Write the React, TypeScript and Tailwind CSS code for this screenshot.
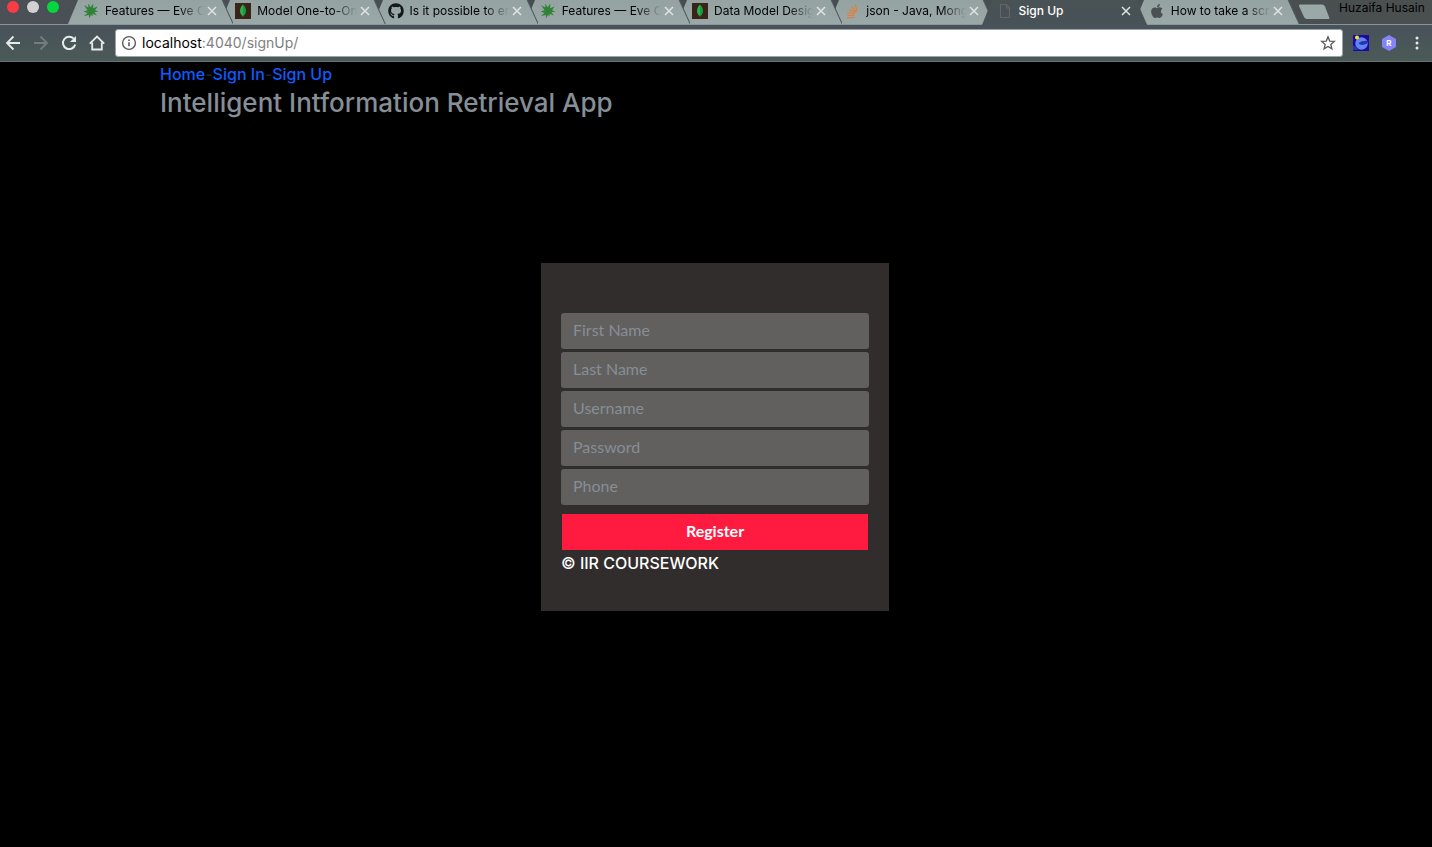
import { useId, type ReactNode } from 'react';
import { FaApple, FaGithub } from 'react-icons/fa';

const LeafIcon = () => (
  <svg viewBox="0 0 16 16" className="size-4" fill="#2f8236">
    <path d="M1 2.200L5.400 4.400 5.200.8 7.700 4.200 10.300.600 10.100 5.200 14.600 3.400 12 7.200 15.400 8.600 11.400 9.300 14 12.600 9.400 10.800 9.800 13 7.900 11.900 6.200 15.500 5.900 12 .9 13 4.600 10 .6 8.600 4.600 7.300z" />
  </svg>
);

const MongoIcon = () => (
  <svg viewBox="0 0 16 16" className="size-4">
    <rect width="16" height="16" fill="#3a2318" />
    <path d="M8 1.500C6 3.600 5 5.400 5 8c0 2.400 1.300 4 2.700 5L8 14.600z" fill="#2fb04c" />
    <path d="M8 1.500c2 2.100 3 3.900 3 6.500 0 2.400-1.300 4-2.700 5L8 14.600z" fill="#1a9d42" />
  </svg>
);

const StackIcon = () => (
  <svg viewBox="0 0 16 16" className="size-4" fill="none" stroke="#ee7a26" strokeWidth="1.100">
    <path d="M3 14.800h7.200M3.200 12.300l7.100.5M3.800 9.500l6.900 1.700M5.200 6.400l6.200 3.400M7.900 3.600l4.500 5.200M11.400 1.600l1.700 6.500" />
  </svg>
);

const PageIcon = () => (
  <svg viewBox="0 0 16 16" className="size-4" fill="none" stroke="#686766" strokeWidth="1">
    <path d="M3.500 1.500h6l3 3.500v9.500h-9zM9.500 1.500V5h3" />
  </svg>
);

type TabInfo = { title: string; icon: ReactNode; layer: string; active?: boolean };

const tabs: TabInfo[] = [
  { title: 'Features — Eve C', icon: <LeafIcon />, layer: 'z-[8]' },
  { title: 'Model One-to-On', icon: <MongoIcon />, layer: 'z-[7]' },
  { title: 'Is it possible to er', icon: <FaGithub className="size-4 text-[#15181a]" />, layer: 'z-[6]' },
  { title: 'Features — Eve C', icon: <LeafIcon />, layer: 'z-[5]' },
  { title: 'Data Model Desig', icon: <MongoIcon />, layer: 'z-[4]' },
  { title: 'json - Java, Mong', icon: <StackIcon />, layer: 'z-[3]' },
  { title: 'Sign Up', icon: <PageIcon />, layer: 'z-[9]', active: true },
  { title: 'How to take a scr', icon: <FaApple className="size-4 text-[#4b5052]" />, layer: 'z-[1]' },
];

function TabShape({ active }: { active?: boolean }) {
  const id = useId();
  return (
    <svg
      viewBox="0 0 165 24"
      preserveAspectRatio="none"
      className={
        active
          ? 'absolute inset-x-0 top-0 -z-10 h-[25px] w-full'
          : 'absolute inset-x-0 top-0 -z-10 h-6 w-full'
      }
    >
      <defs>
        <linearGradient id={id} x1="0" y1="0" x2="0" y2="1">
          <stop offset="0" stopColor={active ? '#495255' : '#94a2a2'} />
          <stop offset="1" stopColor={active ? '#475257' : '#9ba8a8'} />
        </linearGradient>
      </defs>
      <path d="M10 0H154L165 24H0z" fill={`url(#${id})`} />
      {!active && <path d="M154 0L165 24" stroke="#4f595c" strokeWidth="1" />}
    </svg>
  );
}

function Tab({ tab }: { tab: TabInfo }) {
  return (
    <div
      className={`relative isolate -mr-[13px] flex h-6 min-w-0 flex-1 items-start pt-[3px] pr-[13px] pl-[15px] ${tab.layer}`}
    >
      <TabShape active={tab.active} />
      <span className="shrink-0">{tab.icon}</span>
      <button
        type="button"
        className={
          tab.active
            ? 'ml-1.5 min-w-0 flex-1 overflow-hidden text-left text-xs leading-4 font-medium whitespace-nowrap text-white'
            : 'ml-1.5 min-w-0 flex-1 overflow-hidden mask-r-from-75% mask-r-to-100% text-left text-xs leading-4 whitespace-nowrap text-black'
        }
      >
        {tab.title}
      </button>
      <button type="button" aria-label="Close tab" className="size-4 shrink-0">
        <svg viewBox="0 0 16 16" className="size-4" stroke="#dfe3e3" strokeWidth="1.500">
          <path d="M4 4l8 8M12 4l-8 8" />
        </svg>
      </button>
    </div>
  );
}

function TabStrip() {
  return (
    <div className="relative z-10 flex h-6 bg-linear-to-r from-[#4a5055] via-[#454d51] to-[#4a504f]">
      <div className="flex w-[68px] shrink-0 gap-2 pt-px pl-[7px]">
        <button type="button" aria-label="Close window" className="size-3 rounded-full bg-[#fc3b45]" />
        <button type="button" aria-label="Minimise window" className="size-3 rounded-full bg-[#d4d1d3]" />
        <button type="button" aria-label="Zoom window" className="size-3 rounded-full bg-[#05d741]" />
      </div>
      <div className="isolate flex min-w-0 flex-1 pr-[13px]">
        {tabs.map((tab, i) => (
          <Tab key={i} tab={tab} />
        ))}
      </div>
      <button type="button" aria-label="New tab" className="mt-1 h-4 w-8 shrink-0">
        <svg viewBox="0 0 32 16" className="h-4 w-8">
          <path d="M.8.500H23q2 0 3 2l4.200 11q.5 1.500-1 1.500H8q-2 0-3-2L0 2Q-.2.5.8.5z" fill="#9aa8a8" />
        </svg>
      </button>
      <span className="w-[101px] shrink-0 pl-2 text-xs leading-4 text-black">Huzaifa Husain</span>
    </div>
  );
}

function Toolbar() {
  return (
    <div className="flex h-[38px] items-center border-y border-t-[#8b9496] border-b-[#69726f] bg-linear-to-b from-[#48525a] to-[#4a5a57] text-[#e8eaea]">
      <div className="flex shrink-0 gap-3 pr-2.5 pl-[5px]">
        <button type="button" aria-label="Back" className="size-4">
          <svg viewBox="0 0 16 16" className="size-4" fill="none" stroke="currentColor" strokeWidth="1.800">
            <path d="M15 8H2.500M8.500 1.500L2 8l6.500 6.500" />
          </svg>
        </button>
        <button type="button" aria-label="Forward" className="size-4 text-[#737d80]">
          <svg viewBox="0 0 16 16" className="size-4" fill="none" stroke="currentColor" strokeWidth="1.800">
            <path d="M1 8h12.500M7.500 1.500L14 8l-6.500 6.500" />
          </svg>
        </button>
        <button type="button" aria-label="Reload" className="size-4">
          <svg viewBox="0 0 16 16" className="size-4" fill="none" stroke="currentColor" strokeWidth="2">
            <path d="M12.700 3.600A6.200 6.200 0 1 0 14.200 9.500" />
            <path d="M15 1v6H9z" fill="currentColor" stroke="none" />
          </svg>
        </button>
        <button type="button" aria-label="Home" className="size-4">
          <svg viewBox="0 0 16 16" className="size-4" fill="none" stroke="currentColor" strokeWidth="1.800">
            <path d="M.8 8.600L8 1.500l7.200 7.100M3.200 7.500v7h9.600v-7" />
          </svg>
        </button>
      </div>
      <div className="flex h-7 min-w-0 flex-1 items-center rounded-[3px] border border-[#9da4a4] bg-white pr-1.5 pl-[5px]">
        <svg viewBox="0 0 16 16" className="size-4 shrink-0" fill="none" stroke="#5a5a5a" strokeWidth="1.400">
          <circle cx="8" cy="8" r="6.400" />
          <path d="M8 7.200v4M8 4.500v1.500" strokeWidth="1.600" />
        </svg>
        <a href="#address" className="ml-[5px] flex-1 text-sm text-[#808080]">
          <span className="text-black">localhost</span>:4040/signUp/
        </a>
        <button type="button" aria-label="Bookmark this page" className="size-4">
          <svg viewBox="0 0 16 16" className="size-4" fill="none" stroke="#5a5a5a" strokeWidth="1.300">
            <path d="M8 1.800l1.700 4.300 4.600.3-3.500 3 1.100 4.500L8 11.500l-3.900 2.400 1.100-4.500-3.500-3 4.600-.3z" />
          </svg>
        </button>
      </div>
      <div className="flex shrink-0 gap-3 pr-[7px] pl-2.5">
        <svg viewBox="0 0 16 16" className="size-4">
          <rect width="16" height="16" fill="#1b0a9c" />
          <circle cx="8.500" cy="8.500" r="6.200" fill="#5f86f2" />
          <path d="M5.500 8Q9 5.200 15.800 5.800 14.500 9.800 9.500 10q-3 0-4-2z" fill="#2f31ab" />
          <path d="M0 10.500l4 1.500 1 3H0z" fill="#2c35ae" />
          <circle cx="4" cy="2.500" r="2" fill="#f5e61e" />
        </svg>
        <svg viewBox="0 0 16 16" className="size-4">
          <path d="M8 0l7 4v8l-7 4-7-4V4z" fill="#8583f5" />
          <text x="8" y="11" textAnchor="middle" fontSize="8" fontWeight="700" fill="#fff">
            R
          </text>
        </svg>
        <button type="button" aria-label="Menu" className="size-4">
          <svg viewBox="0 0 16 16" className="size-4" fill="currentColor">
            <circle cx="8" cy="3" r="1.500" />
            <circle cx="8" cy="8" r="1.500" />
            <circle cx="8" cy="13" r="1.500" />
          </svg>
        </button>
      </div>
    </div>
  );
}

const fields = [
  { label: 'First Name', type: 'text' },
  { label: 'Last Name', type: 'text' },
  { label: 'Username', type: 'text' },
  { label: 'Password', type: 'password' },
  { label: 'Phone', type: 'tel' },
];

function SignUpForm() {
  return (
    <form
      className="mx-auto mt-[143px] w-[348px] max-w-full bg-[#322d2d] px-5 pt-[50px] pb-9"
      onSubmit={(e) => e.preventDefault()}
    >
      <div className="flex flex-col gap-[3px]">
        {fields.map((f) => (
          <input
            key={f.label}
            type={f.type}
            aria-label={f.label}
            placeholder={f.label}
            className="h-9 w-full rounded-[3px] bg-[#62605e] px-3 pb-[3px] font-[Lato,sans-serif] text-base text-white outline-none placeholder:text-[#868e96]"
          />
        ))}
      </div>
      <div className="px-px pt-[9px]">
        <button
          type="submit"
          className="h-9 w-full bg-[#ff1a40] pb-0.5 font-[Lato,sans-serif] text-base font-bold text-white"
        >
          Register
        </button>
      </div>
      <p className="mt-px text-base leading-6 font-medium text-white">© IIR COURSEWORK</p>
    </form>
  );
}

export default function App() {
  return (
    <div className="min-h-screen bg-black font-[Inter,sans-serif]">
      <header>
        <TabStrip />
        <Toolbar />
      </header>
      <main className="pr-0.5">
        <div className="mx-auto max-w-[1110px]">
          <nav className="text-base leading-6 font-medium text-[#212529]">
            <a href="#home" className="text-[#0d5cff]">Home</a>-
            <a href="#sign-in" className="text-[#0d5cff]">Sign In</a>-
            <a href="#sign-up" className="text-[#0d5cff]">Sign Up</a>
          </nav>
          <h1 className="text-[26px] leading-[34px] font-medium text-[#868e96]">
            Intelligent Intformation Retrieval App
          </h1>
        </div>
        <SignUpForm />
      </main>
    </div>
  );
}
